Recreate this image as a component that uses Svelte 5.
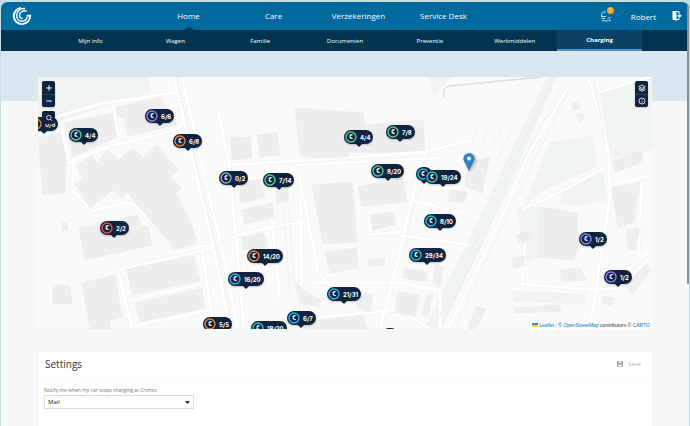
<script>
    const tabs = ["Home", "Care", "Verzekeringen", "Service Desk"];
    const subTabs = ["Mijn info", "Wagen", "Familie", "Documenten", "Preventie", "Werkmiddelen", "Charging"];

    let activeTab = $state("Home");
    let activeSubTab = $state("Charging");
    let notifyBy = $state("Mail");

    const colors = {
        green: "#4fd09a",
        orange: "#f5822f",
        purple: "#8f80f5",
        cyan: "#22bdea",
        red: "#ee4a55",
        grey: "#93abcc"
    };

    // x, y: top left corner of the pin on the map
    const stations = [
        { x: -9, y: 40, label: "0/8", color: "orange" },
        { x: 107, y: 32, label: "6/6", color: "purple" },
        { x: 31, y: 51, label: "4/4", color: "green" },
        { x: 135, y: 57, label: "6/8", color: "orange" },
        { x: 181, y: 94, label: "0/2", color: "grey" },
        { x: 225, y: 96, label: "7/14", color: "green" },
        { x: 306, y: 53, label: "4/4", color: "green" },
        { x: 348, y: 48, label: "7/8", color: "green" },
        { x: 333, y: 87, label: "8/20", color: "green" },
        { x: 378, y: 90, label: "", color: "cyan" },
        { x: 387, y: 93, label: "19/24", color: "green" },
        { x: 386, y: 137, label: "8/10", color: "cyan" },
        { x: 371, y: 171, label: "29/34", color: "cyan" },
        { x: 62, y: 144, label: "2/2", color: "red" },
        { x: 209, y: 172, label: "14/20", color: "orange" },
        { x: 190, y: 195, label: "16/20", color: "cyan" },
        { x: 289, y: 210, label: "21/31", color: "cyan" },
        { x: 249, y: 234, label: "6/7", color: "cyan" },
        { x: 213, y: 244, label: "18/20", color: "cyan" },
        { x: 165, y: 240, label: "5/5", color: "orange" },
        { x: 541, y: 155, label: "1/2", color: "purple" },
        { x: 566, y: 193, label: "1/2", color: "purple" },
        { x: 344, y: 251, label: "", color: "cyan" }
    ];

    const greens = [
        "38,77 150,77 150,92 38,128",
        "547,77 557,77 498,210 442,329 424,329 483,210",
        "550,142 593,135 597,167 545,190 523,207",
        "600,92 652,78 652,150 610,158",
        "565,187 603,172 607,200 575,206 560,203",
        "512,291 586,294 584,304 514,302",
        "429,77 452,77 440,90 434,97",
        "517,207 540,207 538,257 524,262"
    ];

    const buildings = [
        "65,123 112,113 117,137 73,157",
        "116,107 160,97 177,125 128,136 124,118 118,118",
        "38,138 60,133 66,157 65,193 43,195",
        "77,165 92,155 97,163 108,150 118,160 133,148 143,158 157,145 178,170 170,178 182,187 176,194 192,225 197,243 175,250 135,202 128,192 122,198 113,190 90,208 75,184 83,178",
        "79,228 137,215 140,225 148,227 152,245 85,260",
        "127,269 193,256 200,281 132,295",
        "135,303 202,288 205,308 140,322",
        "82,283 115,275 122,317 110,320 110,329 90,329",
        "53,285 70,285 72,304 53,304",
        "62,223 66,222 68,230 62,231",
        "295,108 363,113 365,125 423,120 425,150 373,153 350,152 348,157 315,158 300,155",
        "257,135 277,132 280,155 260,157",
        "230,138 250,137 252,158 232,160",
        "312,185 352,182 357,242 323,244",
        "358,187 403,177 407,202 362,206",
        "240,183 260,180 265,198 240,203",
        "275,187 287,185 289,201 277,203",
        "242,210 272,203 274,217 245,224",
        "370,215 393,212 395,225 373,230",
        "325,252 357,248 358,268 330,273",
        "368,260 385,258 385,265 368,266",
        "398,292 420,295 415,317 395,312",
        "405,268 427,272 425,282 403,278",
        "242,237 264,233 267,247 243,250",
        "295,283 320,300 320,307 300,303",
        "357,290 373,295 370,312 357,308",
        "298,323 363,315 367,329 300,329",
        "435,264 443,267 440,287 433,283",
        "427,295 433,293 428,317 422,316",
        "467,163 490,157 482,193 465,187",
        "450,190 467,192 464,203 448,201",
        "571,103 579,101 580,109 573,110",
        "577,114 583,113 584,120 579,122",
        "540,207 577,213 578,250 573,260 538,257",
        "612,161 641,151 643,162 616,172",
        "612,188 640,182 634,222 618,228",
        "626,230 640,228 636,250 628,250",
        "517,235 530,230 534,240 519,244",
        "512,258 524,256 524,266 514,268",
        "560,270 580,268 586,280 562,282",
        "514,308 560,305 562,311 515,313",
        "603,296 614,298 612,306 602,303",
        "625,284 646,264 651,270 632,295",
        "476,306 486,309 476,329 468,329"
    ];

    const roads = [
        "38,122 100,104 178,92",
        "66,164 110,146 176,130 187,118",
        "62,128 68,160",
        "114,108 118,140",
        "174,77 194,165 214,250 230,329",
        "182,77 202,165 222,250 238,329",
        "74,160 72,190 92,211 130,202 142,212 178,252 214,244",
        "118,270 212,248",
        "118,270 132,329",
        "130,300 202,284",
        "134,326 210,310",
        "202,250 212,318",
        "218,110 230,170 244,329",
        "230,165 330,159 425,152 470,140",
        "300,172 302,329",
        "296,165 440,158",
        "236,235 300,222",
        "270,203 280,300",
        "300,180 318,272 330,286",
        "310,283 400,283 430,290",
        "425,152 414,190 398,260 380,329",
        "398,235 470,245",
        "400,282 440,290 440,329",
        "365,235 400,232",
        "410,200 470,215",
        "567,89 528,155 505,210 448,329",
        "588,77 598,110 608,150 610,195 600,262 590,329",
        "600,92 652,76",
        "523,209 560,192 604,168",
        "610,185 652,175",
        "642,180 638,258 652,252",
        "597,290 620,288 650,257",
        "520,284 597,290",
        "525,240 522,285",
        "285,320 400,310 430,329"
    ];

    const tracks = [
        "177,77 197,165 217,250 234,329",
        "560,90 520,165 495,215 446,315",
        "568,92 530,170 508,215 456,325",
        "552,84 495,200 434,329",
        "478,124 472,144",
        "490,125 482,144",
        "502,126 494,144",
        "512,130 496,162",
        "289,210 294,290",
        "284,212 290,295",
        "432,165 412,212 404,260",
        "594,80 605,145"
    ];
</script>

<svelte:head>
    <title>Charging</title>
</svelte:head>

<div class="window">
    <header>
        <div class="top-bar">
            <a class="logo" href="#home" aria-label="Start">
                <svg viewBox="0 0 20 20">
                    <path d="M9 1.9C4.6 2.3 1.8 5.9 1.8 10A8.1 8.1 0 0 0 18.2 9.8H14.6" stroke-width="1.9" />
                    <path d="M13.2 2.6C8.6 1.6 4.7 5 4.7 9.4C4.7 13 7.2 15.2 10 15.2C12.6 15.2 14.6 13.6 15 11.2" stroke-width="1.5" />
                    <path d="M14.8 5.2C11 3.6 7.5 6.2 7.5 9.4C7.5 11.4 8.8 12.6 10.6 12.5" stroke-width="1.4" />
                </svg>
            </a>
            <nav class="tabs">
                {#each tabs as tab}
                    <a href="#{tab}" class:active={tab === activeTab} onclick={() => (activeTab = tab)}>{tab}</a>
                {/each}
            </nav>
            <div class="tools">
                <button class="car" aria-label="Messages">
                    <svg viewBox="0 0 12 12">
                        <path d="M1.5 6V4.5L3 2H6M1 6.5H6M1.5 8.5H5M2 10.8H8M7.5 8.2L10.5 7.5M8.5 10.8H10.5L9 9.2" />
                    </svg>
                    <span class="badge">1</span>
                </button>
                <a class="user" href="#profile">Robert</a>
                <button class="logout" aria-label="Log out">
                    <svg viewBox="0 0 10 10">
                        <path d="M0.5 0.5L4.5 1.5V9.8L0.5 8.6Z" fill="#fff" />
                        <path d="M0.5 0.6H7V3M7 6.5V8.5H4.5" fill="none" stroke="#fff" />
                        <path d="M5.2 4.2H7.3V2.6L9.8 4.8L7.3 7V5.5H5.2Z" fill="#fff" />
                    </svg>
                </button>
            </div>
        </div>
        <nav class="sub-bar">
            {#each subTabs as tab}
                <a href="#{tab}" class:active={tab === activeSubTab} onclick={() => (activeSubTab = tab)}>{tab}</a>
            {/each}
        </nav>
    </header>

    <main>
        <section class="map" aria-label="Charging stations">
            <svg class="tiles" viewBox="38 77 614 252" preserveAspectRatio="xMidYMid slice">
                <rect x="38" y="77" width="614" height="252" fill="#fafaf8" />
                {#each greens as points}
                    <polygon {points} fill="#f0f4f0" />
                {/each}
                {#each roads as points}
                    <polyline {points} class="road-case" />
                {/each}
                {#each roads as points}
                    <polyline {points} class="road" />
                {/each}
                {#each tracks as points}
                    <polyline {points} class="track" />
                {/each}
                {#each buildings as points}
                    <polygon {points} class="building" />
                {/each}
                <polyline points="450,86 500,81 542,77" fill="none" stroke="#dcdedc" stroke-width="1.4" />
                <polyline points="444,98 444,89 449,86 458,85" fill="none" stroke="#d4d8d6" />
            </svg>

            {#each stations as station}
                <button
                    class="pin"
                    style:left="{station.x}px"
                    style:top="{station.y}px"
                >
                    <svg class="euro" viewBox="0 0 12 12">
                        <circle cx="6" cy="6" r="5" stroke={colors[station.color]} />
                        <text x="6" y="8">€</text>
                    </svg>
                    {station.label}
                </button>
            {/each}

            <svg class="marker" viewBox="0 0 12 18">
                <path d="M6 0.5C2.9 0.5 0.7 2.8 0.7 5.7C0.7 8.2 3.4 11.2 6 17.5C8.6 11.2 11.3 8.2 11.3 5.7C11.3 2.8 9.1 0.5 6 0.5Z" fill="#2e83c9" stroke="#2a72ad" stroke-width="0.6" />
                <circle cx="6" cy="5.6" r="2" fill="#fff" />
            </svg>

            <div class="controls left">
                <div class="group">
                    <button aria-label="Zoom in"><svg viewBox="0 0 8 8"><path d="M4 1.3V6.7M1.3 4H6.7" /></svg></button>
                    <button aria-label="Zoom out"><svg viewBox="0 0 8 8"><path d="M1.3 4H6.7" /></svg></button>
                </div>
                <div class="group">
                    <button aria-label="Search"><svg class="thin" viewBox="0 0 8 8"><circle cx="3.8" cy="3.6" r="2.2" /><path d="M5.4 5.2L7 6.8" /></svg></button>
                </div>
            </div>
            <div class="controls right">
                <div class="group">
                    <button aria-label="Layers"><svg class="thin" viewBox="0 0 8 8"><path d="M4 1L7.2 2.7L4 4.4L0.8 2.7ZM0.8 4.2L4 5.9L7.2 4.2M0.8 5.6L4 7.3L7.2 5.6" /></svg></button>
                    <button aria-label="Info"><svg class="thin" viewBox="0 0 8 8"><circle cx="4" cy="4" r="3" /><path d="M4 3.8V5.4M4 2.3V2.9" /></svg></button>
                </div>
            </div>

            <div class="attribution">
                <svg viewBox="0 0 6 4"><path fill="#4c7be1" d="M0 0H6V2H0Z" /><path fill="#ffd500" d="M0 2H6V4H0Z" /></svg>
                <a href="#leaflet">Leaflet</a> <i>|</i> © <a href="#osm">OpenStreetMap</a> contributors © <a href="#carto">CARTO</a>
            </div>
        </section>

        <section class="card">
            <div class="card-head">
                <h2>Settings</h2>
                <button class="save" disabled>
                    <svg viewBox="0 0 6 6"><path d="M0 0H5L6 1V6H0Z" fill="#a3a3a3" /><path d="M1.6 0H4V2H1.6ZM1.2 3.6H4.8V5.4H1.2Z" fill="#f1f1f1" /></svg>
                    Save
                </button>
            </div>
            <div class="field">
                <label for="notify">Notify me when my car stops charging at Cronos</label>
                <div class="select">
                    <select id="notify" bind:value={notifyBy}>
                        <option>Mail</option>
                        <option>SMS</option>
                        <option>None</option>
                    </select>
                    <svg viewBox="0 0 6 3"><path d="M0 0H6L3 3Z" /></svg>
                </div>
            </div>
        </section>
    </main>
    <div class="scrollbar"></div>
</div>

<style>
    :global(body) {
        background: #c6dde1;
    }
    .window {
        position: relative;
        display: flex;
        flex-direction: column;
        box-sizing: border-box;
        min-height: 100vh;
        border: solid #c6dde1;
        border-width: 2px 1px 0;
        border-radius: 8px 8px 0 0;
        overflow: hidden;
        background: linear-gradient(#d8e7f0 99px, #f6f8f8 99px);
        font-family: "Open Sans", "Noto Sans", sans-serif;
    }
    a {
        color: inherit;
        text-decoration: none;
    }
    button {
        border: 0;
        padding: 0;
        background: none;
        font-family: inherit;
        color: inherit;
    }
    svg {
        display: block;
    }

    .top-bar {
        display: flex;
        align-items: center;
        height: 28px;
        padding: 0 7px 0 11px;
        background: #006a9e;
        color: #fff;
        font-size: 8px;
    }
    .logo {
        width: 134px;
    }
    .logo svg {
        width: 20px;
        height: 20px;
        fill: none;
        stroke: #fff;
    }
    .tabs {
        display: flex;
        height: 100%;
    }
    .tabs a {
        position: relative;
        width: 85px;
        line-height: 28px;
        text-align: center;
    }
    .tabs a.active::after {
        content: "";
        position: absolute;
        left: 50%;
        bottom: 0;
        transform: translateX(-50%);
        border: 5px solid transparent;
        border-top: 0;
        border-bottom: 3px solid #00344f;
    }
    .tools {
        display: flex;
        align-items: center;
        margin-left: auto;
    }
    .car {
        position: relative;
        margin-right: 19px;
    }
    .car svg {
        width: 12px;
        height: 12px;
        fill: none;
        stroke: #b5dcee;
    }
    .badge {
        position: absolute;
        top: -3px;
        right: -2px;
        width: 7px;
        height: 7px;
        border-radius: 50%;
        background: #f0a41e;
        color: #fff;
        font-size: 5px;
        line-height: 7px;
        text-align: center;
    }
    .user {
        margin-right: 16px;
    }
    .logout svg {
        width: 10px;
        height: 10px;
    }

    .sub-bar {
        display: grid;
        grid-template-columns: repeat(7, 1fr);
        padding: 0 47px;
        background: #00344f;
        color: #fff;
        font-size: 6px;
    }
    .sub-bar a {
        height: 21px;
        line-height: 22px;
        text-align: center;
        box-sizing: border-box;
    }
    .sub-bar a.active {
        background: #0b4162;
        border-bottom: 2px solid #4f8fbb;
        font-weight: 700;
        line-height: 20px;
    }

    main {
        display: flex;
        flex: 1;
        flex-direction: column;
        padding: 26px 37px 0;
    }
    .map {
        position: relative;
        height: 252px;
        overflow: hidden;
    }
    .tiles {
        width: 100%;
        height: 100%;
    }
    .building {
        fill: #eeeeee;
        stroke: #e8e8e8;
        stroke-width: 0.5;
    }
    .road-case,
    .road,
    .track {
        fill: none;
        stroke-linejoin: round;
    }
    .road-case {
        stroke: #ececea;
        stroke-width: 4;
        stroke-dasharray: 3 1;
    }
    .road {
        stroke: #fff;
        stroke-width: 3;
    }
    .track {
        stroke: #dfe1e1;
        stroke-width: 0.7;
        stroke-dasharray: 2 1.5;
    }

    .pin {
        position: absolute;
        display: flex;
        align-items: center;
        gap: 3px;
        height: 14px;
        padding: 0 3px 0 1px;
        border-radius: 7px;
        background: #10233f;
        color: #fff;
        font-family: Inter, sans-serif;
        font-size: 6px;
        font-weight: 700;
        white-space: nowrap;
        box-shadow: 0 1px 2px #10233f40;
    }
    .pin::after {
        content: "";
        position: absolute;
        left: 50%;
        top: 100%;
        transform: translateX(-50%);
        border: 3px solid transparent;
        border-top-color: #10233f;
        border-bottom: 0;
    }
    .euro {
        width: 12px;
        height: 12px;
        fill: none;
        stroke-width: 1.4;
    }
    .euro text {
        fill: #fff;
        font-size: 6px;
        text-anchor: middle;
    }
    .marker {
        position: absolute;
        left: 425px;
        top: 76px;
        width: 12px;
        height: 18px;
        filter: drop-shadow(2px 1px 1px #0003);
    }

    .controls {
        position: absolute;
        top: 4px;
        display: grid;
        gap: 4px;
    }
    .controls.left {
        left: 4px;
    }
    .controls.right {
        right: 4px;
    }
    .group {
        display: grid;
        border-radius: 2px;
        background: #10233f;
        box-shadow: 0 1px 2px #0003;
    }
    .group button {
        display: grid;
        place-items: center;
        width: 13px;
        height: 13px;
    }
    .group button + button {
        border-top: 1px solid #2c3f5c;
        box-sizing: border-box;
    }
    .group svg {
        width: 8px;
        height: 8px;
        fill: none;
        stroke: #fff;
    }
    .group svg.thin {
        stroke-width: 0.8;
    }

    .attribution {
        position: absolute;
        right: 0;
        bottom: 0;
        padding: 0 2px;
        background: #fffc;
        color: #333;
        font-family: "Liberation Sans", sans-serif;
        font-size: 5px;
        line-height: 7px;
    }
    .attribution svg {
        display: inline-block;
        width: 6px;
        height: 4px;
    }
    .attribution a {
        color: #0078a8;
    }
    .attribution i {
        color: #aaa;
        font-style: normal;
    }

    .card {
        flex: 1;
        margin-top: 23px;
        background: #fff;
        box-shadow: 0 0 2px #0000000a;
    }
    .card-head {
        display: flex;
        align-items: center;
        justify-content: space-between;
        height: 24px;
        padding: 0 11px 0 7px;
        border-bottom: 1px solid #fafafa;
    }
    h2 {
        margin: 0;
        color: #333;
        font-size: 10px;
        font-weight: 400;
    }
    .save {
        display: flex;
        align-items: center;
        gap: 5px;
        color: #b4b4b4;
        font-size: 6px;
    }
    .save svg {
        width: 6px;
        height: 6px;
    }
    .field {
        width: 150px;
        padding: 9px 6px;
    }
    label {
        display: block;
        color: #777;
        font-size: 5px;
        line-height: 9px;
        white-space: nowrap;
    }
    .select {
        display: grid;
        align-items: center;
    }
    .select > * {
        grid-area: 1 / 1;
    }
    select {
        appearance: none;
        width: 100%;
        height: 14px;
        padding: 0 3px;
        border: 1px solid #ddd;
        border-radius: 0;
        background: #fff;
        color: #222;
        font-family: inherit;
        font-size: 6px;
    }
    .select svg {
        justify-self: end;
        width: 5px;
        height: 3px;
        margin-right: 4px;
        pointer-events: none;
    }

    .scrollbar {
        position: absolute;
        top: 2px;
        right: 0;
        width: 2px;
        height: 280px;
        border-radius: 1px;
        background: #8b9095;
    }
</style>
